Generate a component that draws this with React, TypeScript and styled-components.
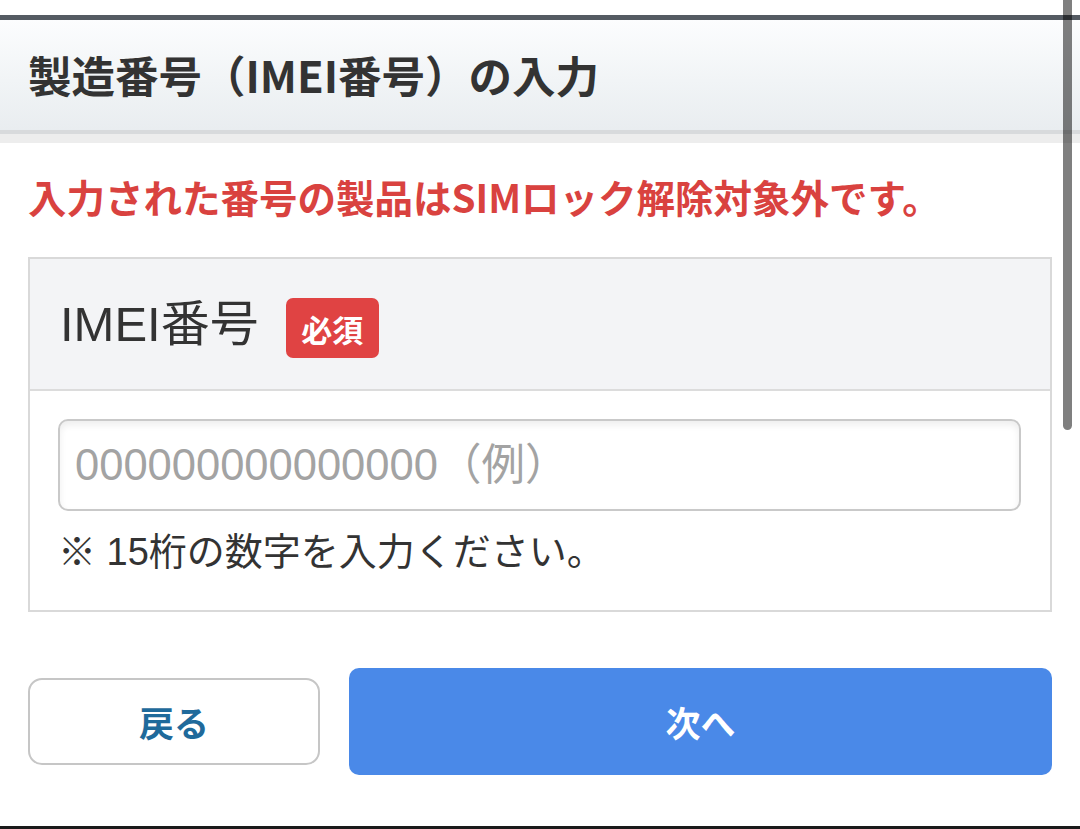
import React from "react";
import styled, { createGlobalStyle } from "styled-components";

const GlobalStyle = createGlobalStyle`
  html, body { margin: 0; padding: 0; background: #ffffff; }
  body { font-family: "Noto Sans CJK JP", "Noto Sans", sans-serif; color: #333333; }
  * { box-sizing: border-box; }
`;

const Page = styled.div`
  position: relative;
  width: 1080px;
  height: 829px;
  overflow: hidden;
  display: flex;
  flex-direction: column;
  background: #ffffff;
`;

const TopGap = styled.div`
  height: 15px;
  background: #ffffff;
`;

const TopRule = styled.div`
  height: 5px;
  background: #555b63;
`;

const Header = styled.header`
  height: 110px;
  display: flex;
  align-items: center;
  padding-left: 28px;
  background: linear-gradient(to bottom, #fcfdfe 0%, #f1f4f6 55%, #e9edf0 100%);
`;

const Title = styled.h1`
  margin: 0;
  font-family: "Noto Sans CJK JP", sans-serif;
  font-size: 43.5px;
  font-weight: 700;
  line-height: 1;
  color: #333333;
`;

const HeaderRule = styled.div`
  height: 4px;
  background: #d8dadc;
`;

const HeaderShade = styled.div`
  height: 9px;
  background: #ededed;
`;

const Content = styled.main`
  flex: 1;
  display: flex;
  flex-direction: column;
  padding: 25px 28px 0;
`;

const ErrorText = styled.p`
  margin: 0;
  font-family: "Noto Sans CJK JP", sans-serif;
  font-size: 38.5px;
  font-weight: 700;
  line-height: 56px;
  color: #d9423f;
  white-space: nowrap;
`;

const Card = styled.section`
  margin-top: 33px;
  border: 2px solid #d9d9d9;
  background: #ffffff;
`;

const CardHead = styled.div`
  height: 132px;
  display: flex;
  align-items: center;
  gap: 27px;
  padding-left: 30px;
  background: #f3f4f6;
  border-bottom: 2px solid #dcdcdc;
`;

const Label = styled.span`
  font-family: "Liberation Sans", "Noto Sans CJK JP", sans-serif;
  font-size: 49px;
  font-weight: 400;
  line-height: 1;
  color: #333333;
`;

const Badge = styled.span`
  width: 93px;
  height: 60px;
  margin-top: 8px;
  display: inline-flex;
  align-items: center;
  justify-content: center;
  border-radius: 7px;
  background: #e04343;
  color: #ffffff;
  font-family: "Noto Sans CJK JP", sans-serif;
  font-size: 31px;
  font-weight: 700;
  line-height: 1;
`;

const CardBody = styled.div`
  padding: 28px 29px 33px 28px;
  display: flex;
  flex-direction: column;
`;

const Field = styled.input`
  height: 92px;
  width: 100%;
  border: 2px solid #c9c9c9;
  border-radius: 10px;
  padding: 0 15px;
  background: #ffffff;
  box-shadow: inset 0 4px 7px rgba(0, 0, 0, 0.07);
  font-family: "Liberation Sans", "Noto Sans CJK JP", sans-serif;
  font-size: 43.5px;
  color: #333333;
  outline: none;
  &::placeholder {
    color: #a3a3a3;
  }
`;

const Note = styled.p`
  margin: 16px 0 0;
  font-family: "Liberation Sans", "Noto Sans CJK JP", sans-serif;
  font-size: 38px;
  line-height: 50px;
  color: #333333;
  white-space: nowrap;
`;

const ButtonRow = styled.div`
  margin-top: 56px;
  display: flex;
  align-items: center;
  gap: 29px;
`;

const BackButton = styled.button`
  width: 292px;
  height: 87px;
  border: 2px solid #c6c6c6;
  border-radius: 14px;
  background: #ffffff;
  color: #1f6a9b;
  font-family: "Noto Sans CJK JP", sans-serif;
  font-size: 35px;
  font-weight: 700;
  cursor: pointer;
`;

const NextButton = styled.button`
  flex: 1;
  height: 107px;
  border: none;
  border-radius: 10px;
  background: #4a89e8;
  color: #ffffff;
  font-family: "Noto Sans CJK JP", sans-serif;
  font-size: 35px;
  font-weight: 700;
  cursor: pointer;
`;

const BottomRule = styled.div`
  height: 3px;
  background: #1a1a1a;
`;

const ScrollThumb = styled.div`
  position: absolute;
  top: 0;
  right: 8px;
  width: 9px;
  height: 430px;
  border-radius: 0 0 5px 5px;
  background: rgba(0, 0, 0, 0.5);
`;

export default function App() {
  return (
    <>
      <GlobalStyle />
      <Page>
        <TopGap />
        <TopRule />
        <Header>
          <Title>製造番号（IMEI番号）の入力</Title>
        </Header>
        <HeaderRule />
        <HeaderShade />
        <Content>
          <ErrorText>入力された番号の製品はSIMロック解除対象外です。</ErrorText>
          <Card>
            <CardHead>
              <Label>IMEI番号</Label>
              <Badge>必須</Badge>
            </CardHead>
            <CardBody>
              <Field type="text" placeholder="000000000000000（例）" />
              <Note>※ 15桁の数字を入力ください。</Note>
            </CardBody>
          </Card>
          <ButtonRow>
            <BackButton type="button">戻る</BackButton>
            <NextButton type="button">次へ</NextButton>
          </ButtonRow>
        </Content>
        <BottomRule />
        <ScrollThumb />
      </Page>
    </>
  );
}
